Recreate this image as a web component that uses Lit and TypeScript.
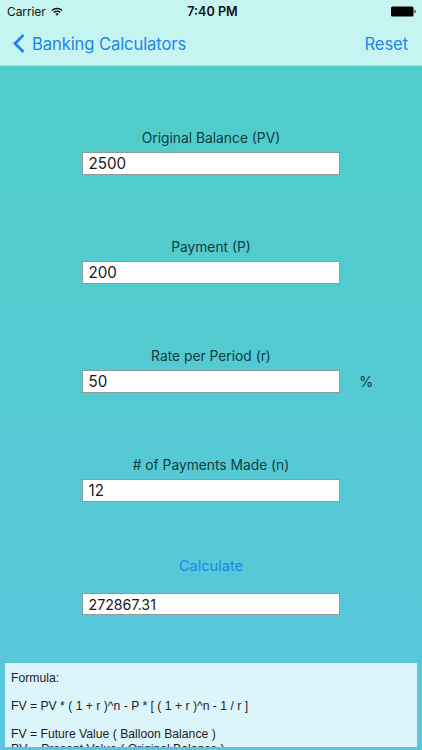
import { LitElement, html, css } from "lit";
import { customElement } from "lit/decorators.js";

@customElement("app-root")
export class AppRoot extends LitElement {
  static styles = css`
    :host {
      display: flex;
      flex-direction: column;
      width: 422px;
      height: 750px;
      overflow: hidden;
      font-family: Inter, "Liberation Sans", sans-serif;
      background: linear-gradient(180deg, #4fcdc8 0%, #52cbcf 40%, #5ac6de 100%);
    }
    .top {
      height: 66px;
      flex: none;
      background: #c5f4f1;
      border-bottom: 1px solid #a9e4de;
      box-sizing: border-box;
      display: flex;
      flex-direction: column;
    }
    .status {
      height: 22px;
      display: grid;
      grid-template-columns: 1fr auto 1fr;
      align-items: center;
      padding: 0 6px 0 7px;
      font-size: 12px;
      color: #111;
    }
    .status .left { display: flex; align-items: center; gap: 5px; letter-spacing: -0.1px; }
    .status .time { font-weight: 600; font-size: 12.6px; padding-left: 2px; }
    .status .right { display: flex; justify-content: flex-end; }
    .nav {
      flex: 1;
      display: flex;
      align-items: center;
      justify-content: space-between;
      padding: 0 14px 0 13px;
      color: #1f86e8;
      font-size: 16.6px;
      letter-spacing: -0.1px;
    }
    .back { display: flex; align-items: center; gap: 7px; }
    .form {
      flex: 1;
      display: flex;
      flex-direction: column;
      gap: 54px;
      padding-top: 61.5px;
      min-height: 0;
    }
    .groups { display: flex; flex-direction: column; gap: 62px; }
    .group { display: flex; flex-direction: column; gap: 4px; }
    .label {
      text-align: center;
      font-size: 13.8px;
      line-height: 20px;
      color: #123c3e;
    }
    .row {
      display: grid;
      grid-template-columns: 82px 258px 1fr;
      align-items: center;
    }
    .box {
      grid-column: 2;
      height: 23px;
      box-sizing: border-box;
      background: #fff;
      border: 1.5px solid #8d9c9f;
      padding-left: 5.5px;
      font-size: 15.2px;
      line-height: 22px;
      color: #1a1a1a;
    }
    .box.output { height: 22px; font-size: 14.2px; line-height: 21px; }
    .unit { padding-left: 19px; font-size: 14.5px; color: #123c3e; }
    .result { display: flex; flex-direction: column; gap: 17px; }
    .calc {
      text-align: center;
      color: #1a8ae8;
      font-size: 14.6px;
      line-height: 20px;
    }
    .panel {
      flex: none;
      height: 84px;
      margin: 0 5.5px 3px 5px;
      background: #dcf5fa;
      box-sizing: border-box;
      padding: 8px 6px 0;
      overflow: hidden;
      font-family: "Liberation Sans", Arial, sans-serif;
      font-size: 12.2px;
      line-height: 14.2px;
      color: #1c1c1c;
    }
    .panel p { margin: 0 0 14px; white-space: nowrap; }
    .panel p.tight { margin: 0; }
  `;

  render() {
    const fields = [
      ["Original Balance (PV)", "2500", ""],
      ["Payment (P)", "200", ""],
      ["Rate per Period (r)", "50", "%"],
      ["# of Payments Made (n)", "12", ""],
    ];
    return html`
      <div class="top">
        <div class="status">
          <div class="left">
            <span>Carrier</span>
            <svg width="12" height="9" viewBox="0 0 13 10">
              <path d="M0.4 3.4C3.8 0.1 9.2 0.1 12.6 3.4L11.6 4.5C8.7 1.8 4.3 1.8 1.4 4.5Z" fill="#111"/>
              <path d="M2.5 5.5C4.7 3.4 8.3 3.4 10.5 5.5L9.5 6.6C7.8 5 5.2 5 3.5 6.6Z" fill="#111"/>
              <path d="M4.6 7.6C5.7 6.6 7.3 6.6 8.4 7.6L6.5 9.7Z" fill="#111"/>
            </svg>
          </div>
          <div class="time">7:40 PM</div>
          <div class="right">
            <svg width="25" height="11" viewBox="0 0 25 11">
              <rect x="0" y="0.5" width="22.5" height="10" rx="1.5" fill="#000"/>
              <path d="M23.4 3.8C24.3 4 24.8 4.6 24.8 5.5C24.8 6.4 24.3 7 23.4 7.2Z" fill="#333"/>
            </svg>
          </div>
        </div>
        <div class="nav">
          <div class="back">
            <svg width="12" height="19" viewBox="0 0 12 19">
              <path d="M10.5 1L2 9.5L10.5 18" fill="none" stroke="#1f86e8" stroke-width="2.8"/>
            </svg>
            <span>Banking Calculators</span>
          </div>
          <span>Reset</span>
        </div>
      </div>
      <div class="form">
        <div class="groups">
          ${fields.map(
            ([l, v, u]) => html`
              <div class="group">
                <div class="label">${l}</div>
                <div class="row">
                  <div class="box">${v}</div>
                  ${u ? html`<div class="unit">${u}</div>` : ""}
                </div>
              </div>
            `
          )}
        </div>
        <div class="result">
          <div class="calc">Calculate</div>
          <div class="row"><div class="box output">272867.31</div></div>
        </div>
      </div>
      <div class="panel">
        <p>Formula:</p>
        <p>FV = PV * ( 1 + r )^n - P * [ ( 1 + r )^n - 1 / r ]</p>
        <p class="tight">FV = Future Value ( Balloon Balance )</p>
        <p class="tight">PV = Present Value ( Original Balance )</p>
      </div>
    `;
  }
}
